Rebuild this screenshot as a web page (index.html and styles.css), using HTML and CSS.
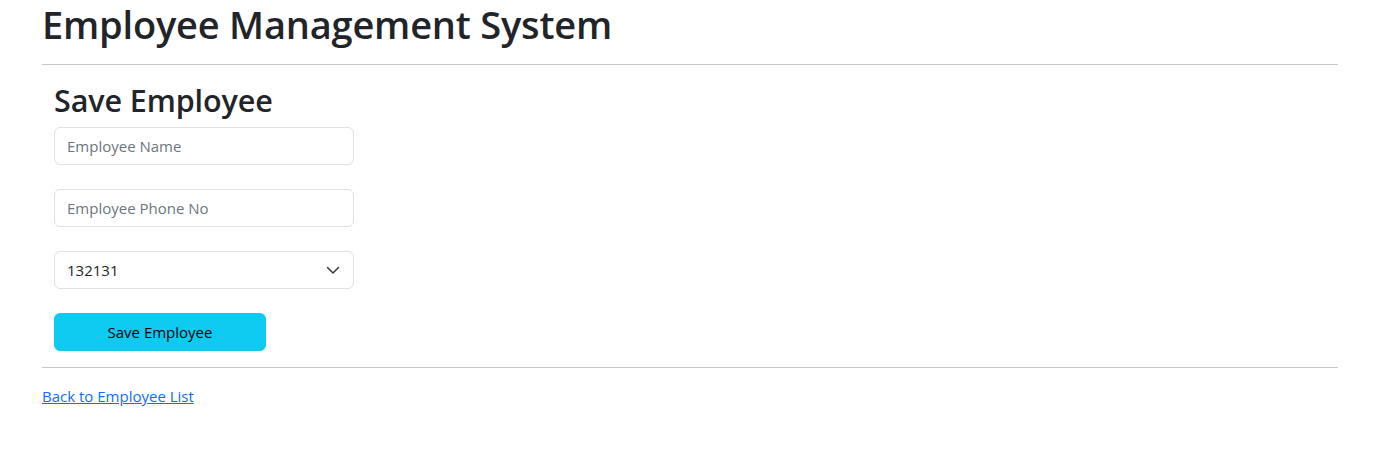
FILE: index.html
```html
<!DOCTYPE html>
<html lang="en">
<head>
<meta charset="utf-8">
<title>Employee Management System</title>
<link rel="stylesheet" href="styles.css">
</head>
<body>
<div class="container">
  <h1 class="title">Employee Management System</h1>
  <hr class="rule">
  <div class="panel">
    <h2 class="subtitle">Save Employee</h2>
    <form class="form">
      <input class="field" type="text" placeholder="Employee Name">
      <input class="field" type="text" placeholder="Employee Phone No">
      <div class="select-wrap">
        <select class="field select">
          <option>132131</option>
        </select>
        <svg class="chevron" viewBox="0 0 16 16" width="16" height="16"><path fill="none" stroke="#343a40" stroke-linecap="round" stroke-linejoin="round" stroke-width="1.5" d="m2.5 5.5 5.5 5.5 5.5-5.5"/></svg>
      </div>
      <button class="btn" type="button">Save Employee</button>
    </form>
  </div>
  <hr class="rule">
  <a class="back" href="#">Back to Employee List</a>
</div>
</body>
</html>
```

FILE: styles.css
```css
* { box-sizing: border-box; }
body {
  margin: 0;
  font-family: "Open Sans", "Noto Sans", sans-serif;
  font-size: 16px;
  line-height: 1.5;
  color: #212529;
  background: #fff;
}
.container {
  width: 1320px;
  margin: 0 30px;
  padding: 0 12px;
}
.title {
  margin: 0 0 8px;
  font-size: 38px;
  font-weight: 600;
  line-height: 48px;
  letter-spacing: -0.2px;
}
.rule {
  margin: 16px 0;
  border: 0;
  border-top: 1px solid #c8c8c8;
}
.panel {
  padding: 0 12px;
}
.subtitle {
  margin: 0 0 8px;
  padding-top: 1px;
  font-size: 30.5px;
  font-weight: 600;
  line-height: 37.4px;
  letter-spacing: -0.1px;
}
.form {
  display: flex;
  flex-direction: column;
  align-items: flex-start;
  gap: 24px;
}
.field {
  display: block;
  width: 300px;
  height: 38px;
  padding: 6px 12px;
  font: inherit;
  font-size: 15px;
  color: #212529;
  background: #fff;
  border: 1px solid #dee2e6;
  border-radius: 6px;
  outline: none;
}
.field::placeholder { color: #6c757d; opacity: 1; }
.select-wrap { position: relative; }
.select { appearance: none; -webkit-appearance: none; padding-right: 36px; }
.chevron {
  position: absolute;
  right: 13px;
  top: 11px;
  width: 16px;
  height: 16px;
  pointer-events: none;
}
.btn {
  width: 212px;
  height: 38px;
  font: inherit;
  font-size: 15px;
  color: #000;
  background: #0dcaf0;
  border: 1px solid #0dcaf0;
  border-radius: 6px;
}
.back {
  color: #0d6efd;
  text-decoration: underline;
  font-size: 15px;
}
```
